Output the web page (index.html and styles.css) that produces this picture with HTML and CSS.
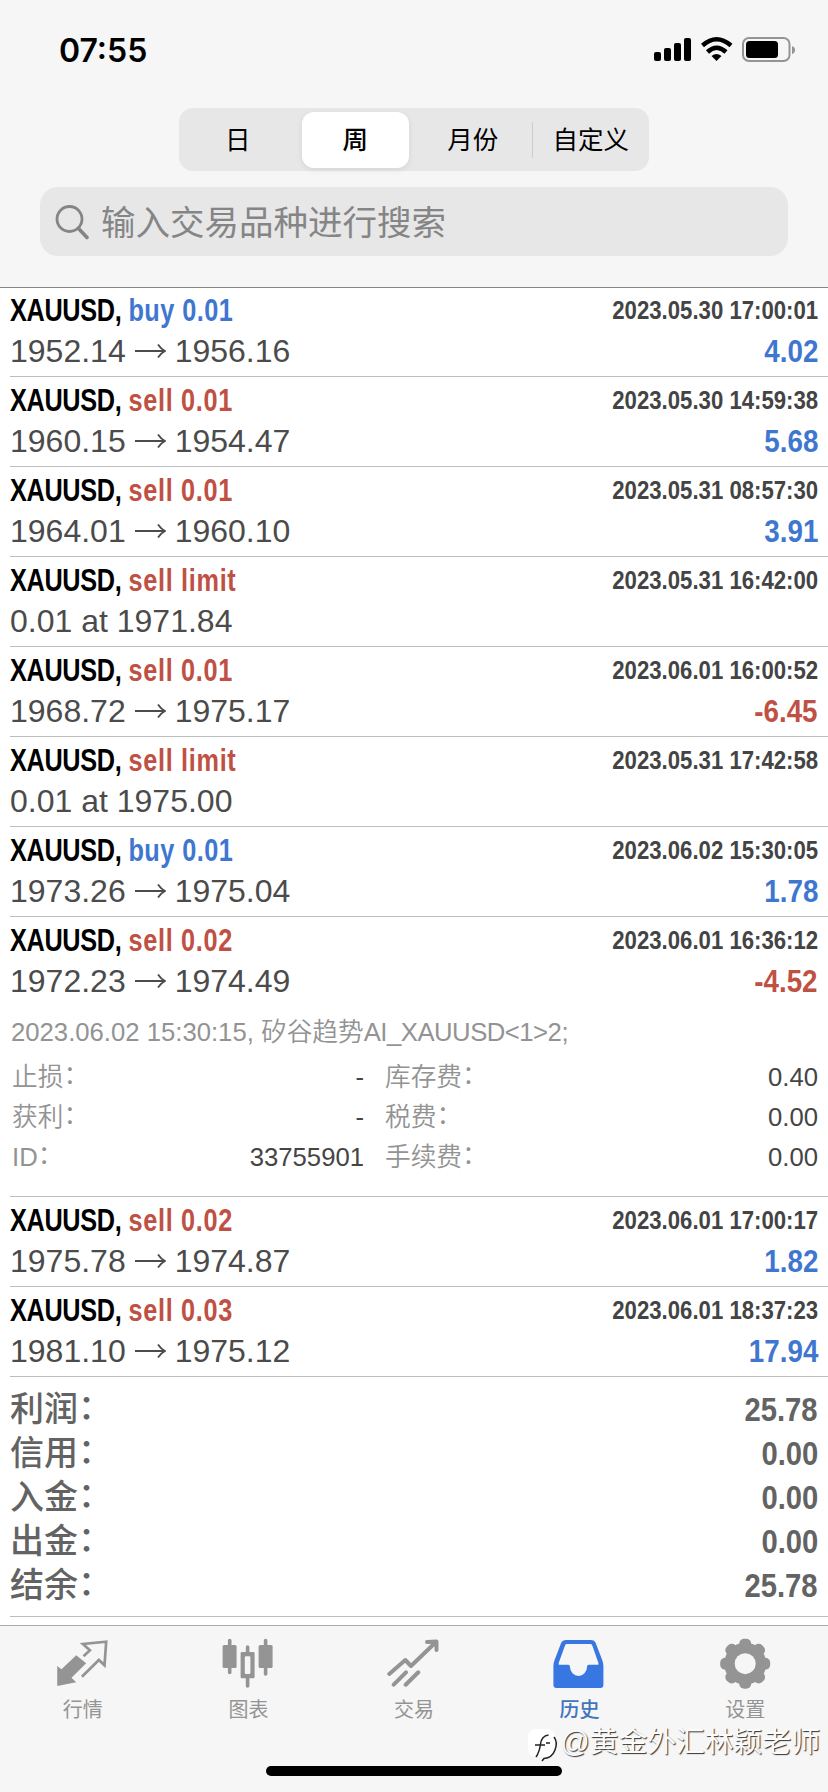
FILE: index.html
```
<!DOCTYPE html>
<html lang="zh-CN">
<head>
<meta charset="utf-8">
<title>历史</title>
<link rel="stylesheet" href="styles.css">
</head>
<body>
<svg width="0" height="0" class="defs"><symbol id="arrow" viewBox="0 0 31 16"><path d="M0 8H30M23 1.500Q26 6 30 8Q26 10 23 14.500" fill="none" stroke="#4b4b4b" stroke-width="1.900"/></symbol></svg>
<div class="phone">
  <header class="top">
    <div class="status">
      <span class="clock">07:55</span>
      <svg width="144" height="30" viewBox="0 0 144 30">
        <rect x="3" y="17" width="7" height="9" rx="2"/><rect x="13" y="13" width="7" height="13" rx="2"/><rect x="23" y="8" width="7" height="18" rx="2"/><rect x="33" y="3" width="7" height="23" rx="2"/>
        <path d="M51.500 10.500Q65.500-2 80 10.500" fill="none" stroke="#000" stroke-width="4.500"/>
        <path d="M56.500 17Q65.500 8.500 75 17" fill="none" stroke="#000" stroke-width="4.500"/>
        <path d="M60.500 21Q65.500 17 70.500 21L65.500 26Z"/>
        <rect x="92" y="3" width="46.500" height="23" rx="6" fill="none" stroke="#949494" stroke-width="2"/>
        <rect x="95" y="6" width="32" height="17" rx="3.500"/>
        <path d="M141 11q3 1 3 4t-3 4z" fill="#949494"/>
      </svg>
    </div>
    <nav class="segments">
      <span class="segment">日</span>
      <span class="segment active">周</span>
      <span class="segment">月份</span>
      <span class="segment divided">自定义</span>
    </nav>
    <div class="search">
      <svg width="34" height="36" viewBox="0 0 34 36" fill="none" stroke="#858585" stroke-width="2.800"><circle cx="14.500" cy="15" r="12.500"/><path d="M23.500 24.500l8.500 9" stroke-width="3.600" stroke-linecap="round"/></svg>
      <span>输入交易品种进行搜索</span>
    </div>
  </header>

  <main class="history">
    <article class="deal">
      <div class="line headline"><span class="name"><span class="symbol">XAUUSD,</span> <span class="buy">buy 0.01</span></span><span class="time">2023.05.30 17:00:01</span></div>
      <div class="line prices"><span>1952.14<svg class="to"><use href="#arrow"/></svg>1956.16</span><span class="profit gain">4.02</span></div>
    </article>
    <article class="deal">
      <div class="line headline"><span class="name"><span class="symbol">XAUUSD,</span> <span class="sell">sell 0.01</span></span><span class="time">2023.05.30 14:59:38</span></div>
      <div class="line prices"><span>1960.15<svg class="to"><use href="#arrow"/></svg>1954.47</span><span class="profit gain">5.68</span></div>
    </article>
    <article class="deal">
      <div class="line headline"><span class="name"><span class="symbol">XAUUSD,</span> <span class="sell">sell 0.01</span></span><span class="time">2023.05.31 08:57:30</span></div>
      <div class="line prices"><span>1964.01<svg class="to"><use href="#arrow"/></svg>1960.10</span><span class="profit gain">3.91</span></div>
    </article>
    <article class="deal">
      <div class="line headline"><span class="name"><span class="symbol">XAUUSD,</span> <span class="sell">sell limit</span></span><span class="time">2023.05.31 16:42:00</span></div>
      <div class="line prices"><span>0.01 at 1971.84</span></div>
    </article>
    <article class="deal">
      <div class="line headline"><span class="name"><span class="symbol">XAUUSD,</span> <span class="sell">sell 0.01</span></span><span class="time">2023.06.01 16:00:52</span></div>
      <div class="line prices"><span>1968.72<svg class="to"><use href="#arrow"/></svg>1975.17</span><span class="profit loss">-6.45</span></div>
    </article>
    <article class="deal">
      <div class="line headline"><span class="name"><span class="symbol">XAUUSD,</span> <span class="sell">sell limit</span></span><span class="time">2023.05.31 17:42:58</span></div>
      <div class="line prices"><span>0.01 at 1975.00</span></div>
    </article>
    <article class="deal">
      <div class="line headline"><span class="name"><span class="symbol">XAUUSD,</span> <span class="buy">buy 0.01</span></span><span class="time">2023.06.02 15:30:05</span></div>
      <div class="line prices"><span>1973.26<svg class="to"><use href="#arrow"/></svg>1975.04</span><span class="profit gain">1.78</span></div>
    </article>
    <article class="deal expanded">
      <div class="line headline"><span class="name"><span class="symbol">XAUUSD,</span> <span class="sell">sell 0.02</span></span><span class="time">2023.06.01 16:36:12</span></div>
      <div class="line prices"><span>1972.23<svg class="to"><use href="#arrow"/></svg>1974.49</span><span class="profit loss">-4.52</span></div>
      <div class="comment">2023.06.02 15:30:15, 矽谷趋势<span class="expert">AI_XAUUSD&lt;1&gt;2;</span></div>
      <div class="details">
        <span>止损<i class="colon">：</i></span><b>-</b><span>库存费<i class="colon">：</i></span><b>0.40</b>
        <span>获利<i class="colon">：</i></span><b>-</b><span>税费<i class="colon">：</i></span><b>0.00</b>
        <span>ID<i class="colon">：</i></span><b>33755901</b><span>手续费<i class="colon">：</i></span><b>0.00</b>
      </div>
    </article>
    <article class="deal">
      <div class="line headline"><span class="name"><span class="symbol">XAUUSD,</span> <span class="sell">sell 0.02</span></span><span class="time">2023.06.01 17:00:17</span></div>
      <div class="line prices"><span>1975.78<svg class="to"><use href="#arrow"/></svg>1974.87</span><span class="profit gain">1.82</span></div>
    </article>
    <article class="deal">
      <div class="line headline"><span class="name"><span class="symbol">XAUUSD,</span> <span class="sell">sell 0.03</span></span><span class="time">2023.06.01 18:37:23</span></div>
      <div class="line prices"><span>1981.10<svg class="to"><use href="#arrow"/></svg>1975.12</span><span class="profit gain">17.94</span></div>
    </article>
    <section class="summary">
      <div class="total"><span>利润<i class="colon">：</i></span><b>25.78</b></div>
      <div class="total"><span>信用<i class="colon">：</i></span><b>0.00</b></div>
      <div class="total"><span>入金<i class="colon">：</i></span><b>0.00</b></div>
      <div class="total"><span>出金<i class="colon">：</i></span><b>0.00</b></div>
      <div class="total"><span>结余<i class="colon">：</i></span><b>25.78</b></div>
    </section>
  </main>

  <footer class="tabs">
    <div class="tab">
      <svg width="54" height="52" viewBox="0 0 54 52"><path d="M1.200 28l4.300 3.300 14.700-14 10 8-14.700 14.400 4.700 4.600-17.700 3.400H1.200z" fill="#949494"/><path d="M27.500 18.300l6.400-6-7-6.300 23.300-2.300-1.700 23.600-5.600-5.300-17 16.700" fill="none" stroke="#949494" stroke-width="2.700"/></svg>
      <span>行情</span>
    </div>
    <div class="tab">
      <svg width="54" height="52" viewBox="0 0 54 52" fill="#949494"><rect x="1.600" y="7" width="14" height="23" rx="1.500"/><rect x="6.900" y=".700" width="3.600" height="35.600" rx="1.800"/><path fill-rule="evenodd" d="M21 14h11.200q1.400 0 1.400 1.400v23.500q0 1.400-1.400 1.400H21q-1.400 0-1.400-1.400V15.400q0-1.400 1.400-1.400zM25 18.300q-1.200 0-1.200 1.200v15.300q0 1.200 1.200 1.200h3.200q1.200 0 1.200-1.200V19.500q0-1.200-1.200-1.200z"/><path d="M26.600 9v6M26.600 39v9" stroke="#949494" stroke-width="3.600" stroke-linecap="round"/><rect x="37.600" y="7" width="14" height="23" rx="1.500"/><rect x="42.800" y=".700" width="3.600" height="37" rx="1.800"/></svg>
      <span>图表</span>
    </div>
    <div class="tab">
      <svg width="54" height="52" viewBox="0 0 54 52" fill="none" stroke="#949494" stroke-width="4" stroke-linecap="round" stroke-linejoin="round"><path d="M2.300 36l16-14 5.700 6L49 4M40 4l9.500-.500L49.500 12M19 34.300L6.700 46.700M31.300 34.300L18.700 46.700"/></svg>
      <span>交易</span>
    </div>
    <div class="tab current">
      <svg width="54" height="52" viewBox="0 0 54 52"><path fill="#3877e2" fill-rule="evenodd" d="M13 2h25q3.500 0 4.700 3l6.500 17q1.200 3 1.200 6v19q0 3-3 3H3.400q-3 0-3-3V28q0-3 1.200-6l6.500-17Q9.500 2 13 2zM14 6q-1.500 0-2 1.400L5.700 25v1.700h9.600q1.700 0 1.700 2.300a8.500 9 0 0 0 17 0q0-2.300 1.700-2.300h9.700V25L39.300 7.400Q38.800 6 37.300 6z"/></svg>
      <span>历史</span>
    </div>
    <div class="tab">
      <svg width="54" height="52" viewBox="-27.200 -25.700 54 52"><g fill="#949494"><rect x="-6" y="-25" width="12" height="50" rx="5"/><rect x="-6" y="-25" width="12" height="50" rx="5" transform="rotate(45)"/><rect x="-6" y="-25" width="12" height="50" rx="5" transform="rotate(90)"/><rect x="-6" y="-25" width="12" height="50" rx="5" transform="rotate(135)"/><circle r="21"/></g><circle r="10.500" fill="#f6f6f6"/></svg>
      <span>设置</span>
    </div>
    <div class="home-bar"></div>
    <div class="watermark">
      <svg width="32" height="34" viewBox="0 0 32 34"><rect x="0" y="0" width="27" height="28" rx="8" fill="#fff"/><path d="M7 16h10M8 28q3.500-5 4.500-13t8-9M18 14h4M26 8q4 5 1 13t-11 8.500l-2 2.500" fill="none" stroke="#222" stroke-width="1.500"/></svg>
      <span>@黄金外汇林颖老师</span>
    </div>
  </footer>
</div>
</body>
</html>
```
FILE: styles.css
```
* { box-sizing: border-box; }
body { margin: 0; background: #fff; font-family: "Liberation Sans", "Noto Sans CJK SC", sans-serif; }
.defs { display: none; }
.phone { width: 828px; height: 1792px; display: flex; flex-direction: column; overflow: hidden; }

.top { height: 288px; flex: none; background: #f6f6f6; border-bottom: 1px solid #858585; }
.status { height: 108px; padding: 35px 33px 0 59px; display: flex; justify-content: space-between; }
.clock { font: 600 32px/31px Inter, sans-serif; }
.segments { width: 470px; height: 63px; margin-left: 179px; border-radius: 14px; background: #e7e7e7; display: grid; grid-template-columns: repeat(4, 1fr); }
.segment { height: 56px; margin: 4px 5px 0; padding-bottom: 5px; display: flex; align-items: center; justify-content: center; font-size: 25.500px; white-space: nowrap; }
.active { background: #fff; border-radius: 12px; font-weight: 500; box-shadow: 0 2px 6px rgba(0, 0, 0, .08); }
.divided { margin: 14px 0 13px; height: 36px; padding: 0 0 5px; border-left: 1px solid #ccc; }
.search { margin: 16px 40px 0; height: 69px; border-radius: 18px; background: #e7e7e8; display: flex; align-items: center; gap: 12px; padding-left: 15px; color: #858585; font-size: 34.500px; }
.search span { margin-top: -4px; }

.history { flex: 1; }
.deal { height: 90px; margin-left: 10px; padding-right: 10px; border-bottom: 1px solid #bdbdbd; }
.deal:first-child { margin-top: -1px; }
.deal.expanded { height: 280px; }
.line { display: flex; justify-content: space-between; }
.headline { height: 46px; line-height: 48px; }
.prices { height: 36px; line-height: 36px; font-size: 32px; color: #4b4b4b; }
.to { width: 31px; height: 16px; margin: 0 9px; vertical-align: 3px; }
.name { font-weight: bold; font-size: 31px; transform: scaleX(.815); transform-origin: left; white-space: nowrap; }
.symbol { letter-spacing: -.400px; }
.buy { letter-spacing: .550px; }
.sell { letter-spacing: .850px; }
.time { line-height: 47px; font-weight: bold; font-size: 25px; color: #444; transform: scaleX(.887); transform-origin: right; }
.profit { line-height: 37px; font-weight: bold; font-size: 30.500px; transform: scaleX(.91); transform-origin: right; }
.buy, .gain { color: #3f77d0; }
.sell, .loss { color: #bf5044; letter-spacing: .850px; }
.loss { letter-spacing: 0; }
.colon { display: inline-block; font-style: normal; transform: translate(0, -.07em); }
.comment { margin-top: 13px; height: 40px; line-height: 40px; font-size: 25.700px; color: #939393; font-weight: 350; margin-left: 1px; }
.expert { letter-spacing: -.500px; }
.details { margin: 5px 0 0 2px; display: grid; grid-template-columns: 130px 222px 170px 1fr; grid-auto-rows: 40px; line-height: 40px; font-size: 25.700px; color: #939393; font-weight: 350; }
.details b { font-weight: normal; text-align: right; color: #454545; }
.details span:nth-child(4n+3) { padding-left: 21px; }

.summary { margin-left: 10px; padding: 10px 10px 9px 0; border-bottom: 1px solid #bdbdbd; }
.total { display: flex; justify-content: space-between; height: 44px; line-height: 45px; font-size: 34px; color: #636363; font-weight: 500; }
.total b { font-size: 33px; transform: scaleX(.885); transform-origin: right; }

.tabs { height: 167px; flex: none; position: relative; background: #f6f6f6; border-top: 1px solid #aaa; display: flex; }
.tab { flex: 1; display: flex; flex-direction: column; align-items: center; gap: 4px; padding-top: 12px; color: #949494; font-size: 20px; }
.current { color: #4275bd; font-weight: 500; }
.home-bar { position: absolute; left: 266px; bottom: 16px; width: 296px; height: 10px; border-radius: 5px; background: #000; }
.watermark { position: absolute; right: 8px; top: 97px; display: flex; align-items: center; height: 42px; font-size: 28.800px; line-height: 42px; color: #fbfbfb; text-shadow: 1px 1px 1px #333; }
.watermark svg { margin-top: 4px; }
.watermark span { margin-top: -4px; }
```
